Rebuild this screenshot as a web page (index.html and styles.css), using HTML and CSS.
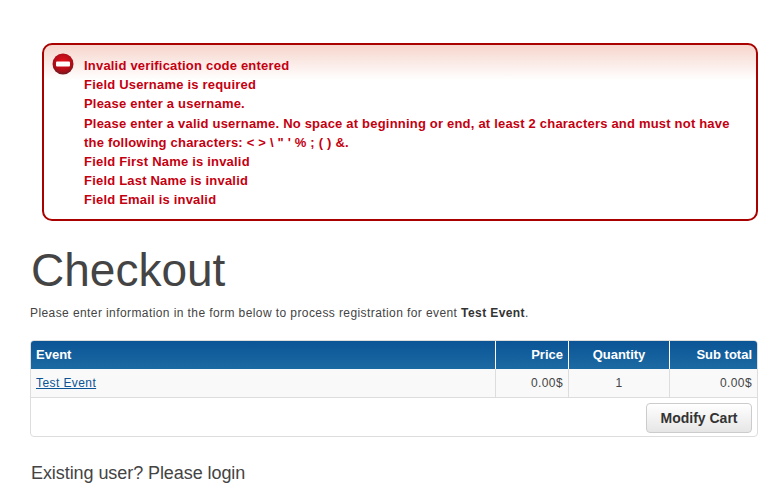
FILE: index.html
```html
<!DOCTYPE html>
<html lang="en">
<head>
    <meta charset="utf-8">
    <title>Checkout</title>
    <link rel="stylesheet" href="styles.css">
</head>
<body>
    <div class="error-box">
        <svg class="error-icon" width="22" height="22" viewBox="0 0 22 22">
            <defs>
                <radialGradient id="redball" cx="50%" cy="40%" r="60%">
                    <stop offset="0" stop-color="#e8101c"/>
                    <stop offset="0.7" stop-color="#b00d18"/>
                    <stop offset="1" stop-color="#6d1a20"/>
                </radialGradient>
            </defs>
            <circle cx="11" cy="11" r="10.5" fill="url(#redball)"/>
            <rect x="4" y="8.5" width="14" height="5" rx="1" fill="#fff"/>
        </svg>
        <ul class="error-list">
            <li>Invalid verification code entered</li>
            <li>Field Username is required</li>
            <li>Please enter a username.</li>
            <li>Please enter a valid username. No space at beginning or end, at least 2 characters and must not have the following characters: &lt; &gt; \ " ' % ; ( ) &amp;.</li>
            <li>Field First Name is invalid</li>
            <li>Field Last Name is invalid</li>
            <li>Field Email is invalid</li>
        </ul>
    </div>

    <h1>Checkout</h1>
    <p class="intro">Please enter information in the form below to process registration for event <b>Test Event</b>.</p>

    <div class="cart">
        <div class="cart-row cart-head">
            <div class="cell">Event</div>
            <div class="cell right">Price</div>
            <div class="cell center">Quantity</div>
            <div class="cell right">Sub total</div>
        </div>
        <div class="cart-row cart-item">
            <div class="cell"><a href="#">Test Event</a></div>
            <div class="cell right">0.00$</div>
            <div class="cell center">1</div>
            <div class="cell right">0.00$</div>
        </div>
        <div class="cart-foot">
            <button type="button" class="btn">Modify Cart</button>
        </div>
    </div>

    <h3>Existing user? Please login</h3>
</body>
</html>
```

FILE: styles.css
```css
body {
    margin: 0;
    padding: 43px 17px 0 30px;
    font: 12px/18px "Liberation Sans", Arial, sans-serif;
    letter-spacing: 0.41px;
    color: #444;
    background: #fff;
}

.error-box {
    display: flex;
    margin-left: 12px;
    height: 178px;
    box-sizing: border-box;
    padding: 8px 20px 0 8px;
    gap: 10px;
    border: 2px solid #a90000;
    border-radius: 10px;
    background: linear-gradient(#f6d5cc, #fff 35px);
}

.error-icon {
    flex: none;
}

.error-list {
    list-style: none;
    margin: 3px 0 0;
    padding: 0;
    font-size: 13px;
    line-height: 19.2px;
    font-weight: bold;
    letter-spacing: 0.2px;
    color: #c40010;
}

h1 {
    font-size: 46px;
    line-height: 50px;
    font-weight: normal;
    letter-spacing: 0;
    color: #444;
    margin: 24px 0 0 1px;
}

.intro {
    margin: 9px 0 0;
}

.intro b {
    color: #333;
}

.cart {
    margin-top: 18px;
    border: 1px solid #ddd;
    border-radius: 4px;
    overflow: hidden;
}

.cart-row {
    display: grid;
    grid-template-columns: 464px 73px 101px 1fr;
}

.cell {
    padding: 0 5px;
    border-left: 1px solid #ddd;
}

.cell:first-child {
    border-left: none;
}

.right {
    text-align: right;
}

.center {
    text-align: center;
}

.cart-head {
    height: 28px;
    line-height: 27px;
    font-size: 13px;
    font-weight: bold;
    letter-spacing: 0;
    color: #fff;
    background: linear-gradient(#0b5496, #1c6aa3);
}

.cart-head .cell {
    border-left-color: #fff;
}

.cart-item {
    height: 28px;
    line-height: 28px;
    background: #f9f9f9;
    border-bottom: 1px solid #ddd;
}

.cart-item a {
    color: #0b5496;
}

.cart-foot {
    display: flex;
    justify-content: flex-end;
    height: 38px;
    padding: 5px 5px 0 0;
    box-sizing: border-box;
}

.btn {
    width: 106px;
    height: 30px;
    padding: 0;
    font: bold 14px "Liberation Sans", Arial, sans-serif;
    color: #333;
    border: 1px solid #ccc;
    border-radius: 4px;
    background: linear-gradient(#fff, #e6e6e6);
}

h3 {
    font-size: 18px;
    line-height: 24px;
    font-weight: normal;
    letter-spacing: -0.07px;
    color: #444;
    margin: 24px 0 0 1px;
}
```
